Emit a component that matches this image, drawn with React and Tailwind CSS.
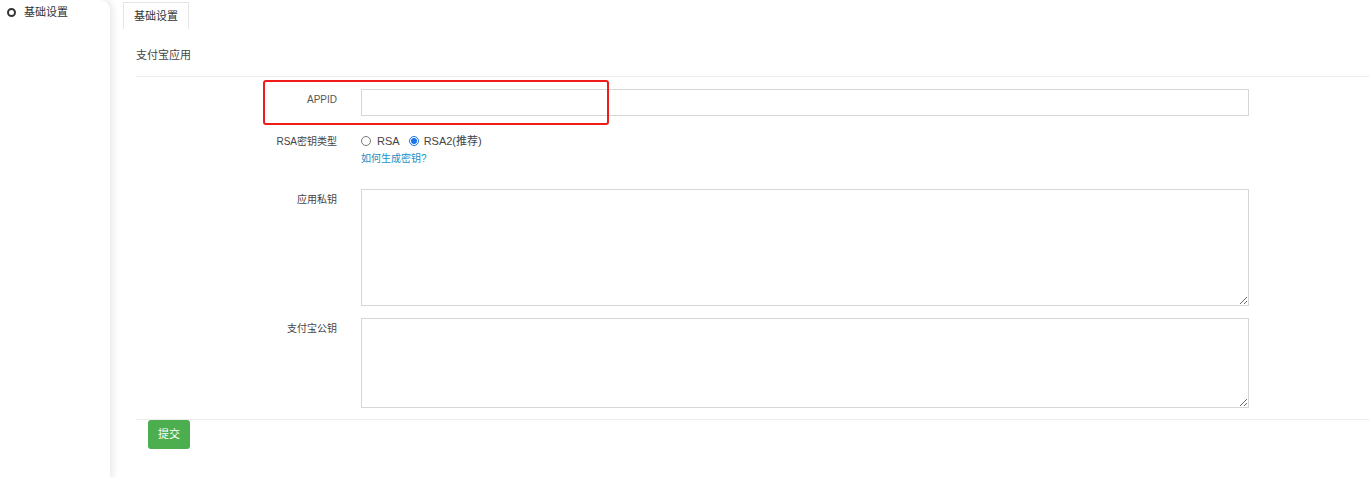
import React from "react";

export default function App() {
  return (
    <div className="relative flex h-[478px] w-[1369px] overflow-hidden bg-white font-['Liberation_Sans','Noto_Sans_CJK_SC',sans-serif]">
      <aside className="relative z-10 w-[110px] shrink-0 rounded-tr-[10px] bg-white shadow-[3px_0_7px_rgba(0,0,0,0.09)]">
        <div className="flex h-[24px] items-center gap-[8px] pl-[7px] text-[11px] text-[#333]">
          <span className="box-border h-[9px] w-[9px] rounded-full border-2 border-[#333]"></span>
          <span>基础设置</span>
        </div>
      </aside>
      <main className="flex-1">
        <div className="pl-[13px] pt-[2px]">
          <div className="box-border flex h-[27px] w-[66px] items-center border border-b-0 border-[#e5e5e5] pl-[10px] text-[11px] text-[#333]">
            基础设置
          </div>
        </div>
        <div className="pl-[26px]">
          <div className="mt-[18px] h-[16px] text-[11px] leading-[16px] text-[#444]">支付宝应用</div>
          <div className="mt-[13px] border-t border-[#ececec]"></div>

          <div className="mt-[12px] flex">
            <div className="w-[225px] shrink-0 pr-[24px] pt-[4px] text-right text-[10px] leading-[14px] text-[#555]">APPID</div>
            <input className="box-border h-[27px] w-[888px] border border-[#d6d6d6] bg-white outline-none" />
          </div>

          <div className="mt-[15px] flex">
            <div className="flex h-[20px] w-[225px] shrink-0 items-center justify-end pr-[24px] text-[10px] text-[#444]">RSA密钥类型</div>
            <div className="flex flex-col">
              <div className="flex h-[20px] items-center text-[11px] text-[#444]">
                <span className="box-border h-[10px] w-[10px] rounded-full border border-[#777]"></span>
                <span className="ml-[6px]">RSA</span>
                <span className="ml-[9px] box-border flex h-[10px] w-[10px] items-center justify-center rounded-full border border-[#1a73e8]">
                  <span className="h-[6px] w-[6px] rounded-full bg-[#1a73e8]"></span>
                </span>
                <span className="ml-[5px]">RSA2(推荐)</span>
              </div>
              <div className="mt-[1px] h-[14px] text-[10px] leading-[14px] text-[#1a8fc4]">如何生成密钥?</div>
            </div>
          </div>

          <div className="mt-[23px] flex">
            <div className="w-[225px] shrink-0 pr-[24px] pt-[4px] text-right text-[10px] leading-[14px] text-[#444]">应用私钥</div>
            <textarea className="box-border block h-[117px] w-[888px] border border-[#d6d6d6] bg-white outline-none"></textarea>
          </div>

          <div className="mt-[12px] flex">
            <div className="w-[225px] shrink-0 pr-[24px] pt-[4px] text-right text-[10px] leading-[14px] text-[#444]">支付宝公钥</div>
            <textarea className="box-border block h-[90px] w-[888px] border border-[#d6d6d6] bg-white outline-none"></textarea>
          </div>

          <div className="mt-[11px] border-t border-[#ececec]"></div>
          <button className="ml-[12px] flex h-[29px] w-[42px] items-center justify-center rounded-[3px] bg-[#4cae4f] text-[11px] text-white">
            提交
          </button>
        </div>
      </main>
      <div className="pointer-events-none absolute left-[263px] top-[80px] h-[45px] w-[346px] rounded-[3px] border-2 border-[#f01c1c]"></div>
    </div>
  );
}
